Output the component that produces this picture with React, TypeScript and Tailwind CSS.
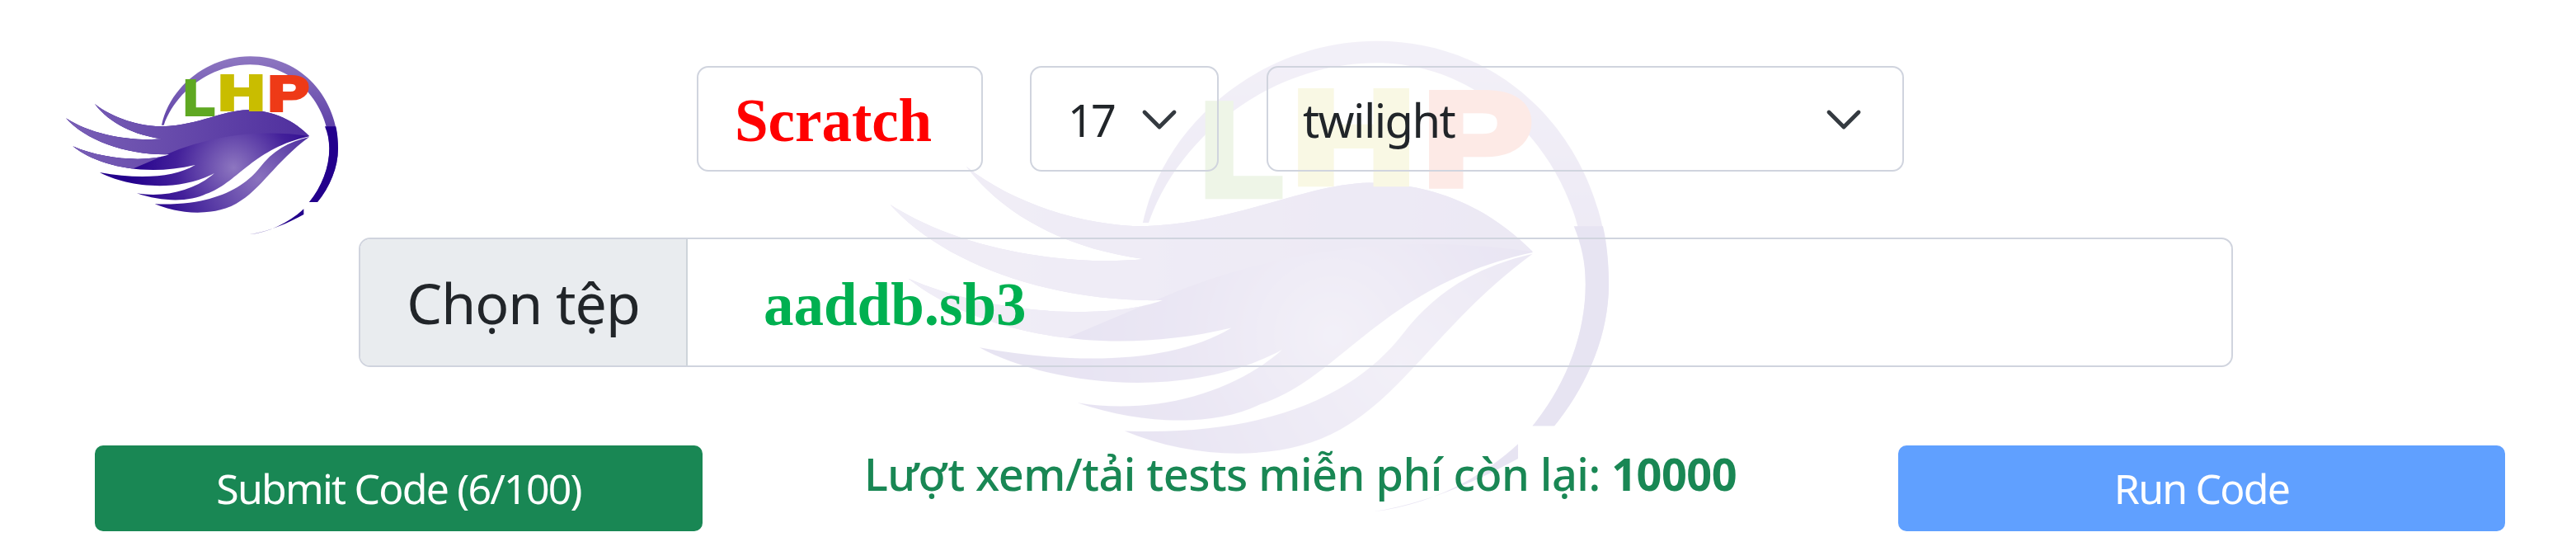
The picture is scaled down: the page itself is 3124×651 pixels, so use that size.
import React from "react";

function Logo({ id, className }: { id: string; className: string }) {
  const body =
    "M1005 375 C950 320 880 282 780 280 C690 282 600 335 470 340 C390 340 290 310 225 258 C280 330 370 372 470 385 C370 395 220 375 120 310 C190 390 340 445 495 442 C420 470 260 462 145 412 C230 480 400 525 590 480 C510 528 380 532 243 507 C330 555 520 585 660 510 C590 572 480 600 378 583 C470 615 570 615 630 585 C740 550 800 420 1005 376 Z";
  const lower =
    "M1005 378 C930 395 870 430 825 490 C770 560 660 630 443 622 C540 662 660 665 740 620 C830 570 880 470 1005 378 Z";
  return (
    <svg viewBox="0 0 1110 810" className={className}>
      <defs>
        <radialGradient id={`${id}-r`} gradientUnits="userSpaceOnUse" cx="730" cy="490" r="380">
          <stop offset="0" stopColor="#8d76c0" />
          <stop offset="0.55" stopColor="#43209a" />
          <stop offset="1" stopColor="#23008c" />
        </radialGradient>
        <radialGradient id={`${id}-l`} gradientUnits="userSpaceOnUse" cx="820" cy="530" r="380">
          <stop offset="0" stopColor="#8a72be" />
          <stop offset="1" stopColor="#28058d" />
        </radialGradient>
        <linearGradient id={`${id}-t`} gradientUnits="userSpaceOnUse" x1="120" y1="300" x2="1000" y2="340">
          <stop offset="0" stopColor="#7a60b6" />
          <stop offset="1" stopColor="#4f2f9e" />
        </linearGradient>
        <linearGradient id={`${id}-c`} gradientUnits="userSpaceOnUse" x1="0" y1="85" x2="0" y2="340">
          <stop offset="0" stopColor="#8e77c1" />
          <stop offset="1" stopColor="#5f42a8" />
        </linearGradient>
        <clipPath id={`${id}-b`}>
          <path d={body} />
        </clipPath>
      </defs>
      <path
        d="M468 335 C500 190 640 85 790 85 C980 85 1110 240 1110 420 C1110 490 1080 560 1035 615 L1005 615 C1050 560 1078 490 1078 420 C1078 260 950 115 790 115 C650 115 520 210 476 335 Z"
        fill={`url(#${id}-c)`}
      />
      <path
        d="M1062 340 L1102 340 C1108 365 1110 395 1110 420 C1110 490 1080 560 1035 615 L1005 615 C1050 560 1078 490 1078 420 C1078 390 1072 365 1062 340 Z"
        fill="#23008c"
      />
      <path d="M985 640 C930 690 860 725 785 733 C860 722 930 690 985 660 Z" fill="#23008c" />
      <path d={body} fill={`url(#${id}-r)`} />
      <path
        d="M1005 375 C800 345 620 385 500 436 L360 495 L100 470 L100 240 L1005 240 Z"
        clipPath={`url(#${id}-b)`}
        fill={`url(#${id}-t)`}
      />
      <path d={lower} fill={`url(#${id}-l)`} />
      <g fontFamily="'Liberation Sans', sans-serif" fontWeight="700" fontSize="180" strokeWidth="12" strokeLinejoin="miter">
        <text transform="translate(548 296) scale(1.02 1)" fill="#5fa822" stroke="#5fa822">L</text>
        <text transform="translate(674 279) scale(1.3 1)" fill="#c9bd00" stroke="#c9bd00">H</text>
        <text transform="translate(855 282) scale(1.24 1)" fill="#ee3a17" stroke="#ee3a17">P</text>
      </g>
    </svg>
  );
}

function Chevron() {
  return (
    <svg viewBox="0 0 16 16" className="w-12 h-12 shrink-0" fill="none" stroke="#343a40" strokeWidth="1.6" strokeLinecap="round" strokeLinejoin="round">
      <path d="M2 5l6 6 6-6" />
    </svg>
  );
}

export default function App() {
  return (
    <div className="relative w-[3124px] h-[651px] overflow-hidden bg-white pt-[80px] font-['Noto_Sans',sans-serif] text-[#212529]">
      <Logo id="wm" className="absolute left-[974px] top-[-25px] w-[977px] h-[713px] opacity-10" />
      <div className="relative h-[128px] flex">
        <div className="w-[845px] shrink-0 pl-[40px]">
          <Logo id="main" className="w-[370px] h-[270px] -mt-[40px]" />
        </div>
        <div className="w-[347px] h-full border-[2.5px] border-[#d0d4de] rounded-[14px] pl-[44px] pt-[6px] flex items-center font-['Liberation_Serif',serif] font-bold text-[73px] text-[#ff0000]">
          Scratch
        </div>
        <div className="ml-[57px] w-[229px] h-full border-[2.5px] border-[#d0d4de] rounded-[14px] pl-[44px] pt-[2px] flex items-center text-[54px] gap-[31px] tracking-[-3px]">
          <span>17</span>
          <Chevron />
        </div>
        <div className="ml-[58px] w-[773px] h-full border-[2.5px] border-[#d0d4de] rounded-[14px] pl-[42px] pr-[47px] pt-[2px] flex items-center justify-between text-[56px] tracking-[-1.6px]">
          <span>twilight</span>
          <Chevron />
        </div>
      </div>
      <div className="relative ml-[435px] mt-[80px] w-[2273px] h-[157px] border-[2.5px] border-[#d0d4de] rounded-[14px] flex items-center overflow-hidden">
        <div className="w-[397px] h-full bg-[#e9ecef] border-r-[2.5px] border-[#ced4da] flex items-center justify-center text-[68px] tracking-[-1px]">
          Chọn tệp
        </div>
        <div className="ml-[92px] pt-[6px] font-['Liberation_Serif',serif] font-bold text-[73px] text-[#00b050]">aaddb.sb3</div>
      </div>
      <div className="relative mt-[95px] pl-[115px] pr-[86px] flex justify-between items-start">
        <div className="w-[737px] h-[104px] bg-[#198754] rounded-[10px] text-white flex items-center justify-center text-[50px] tracking-[-1.8px] leading-none">
          Submit Code (6/100)
        </div>
        <div className="mt-[-2px] text-[#198754] text-[54px] font-medium tracking-[-0.5px] leading-[72px]">
          Lượt xem/tải tests miễn phí còn lại: <span className="font-bold">10000</span>
        </div>
        <div className="w-[736px] h-[104px] bg-[#60a0ff] rounded-[10px] text-white flex items-center justify-center text-[50px] tracking-[-1.8px] leading-none">
          Run Code
        </div>
      </div>
    </div>
  );
}
